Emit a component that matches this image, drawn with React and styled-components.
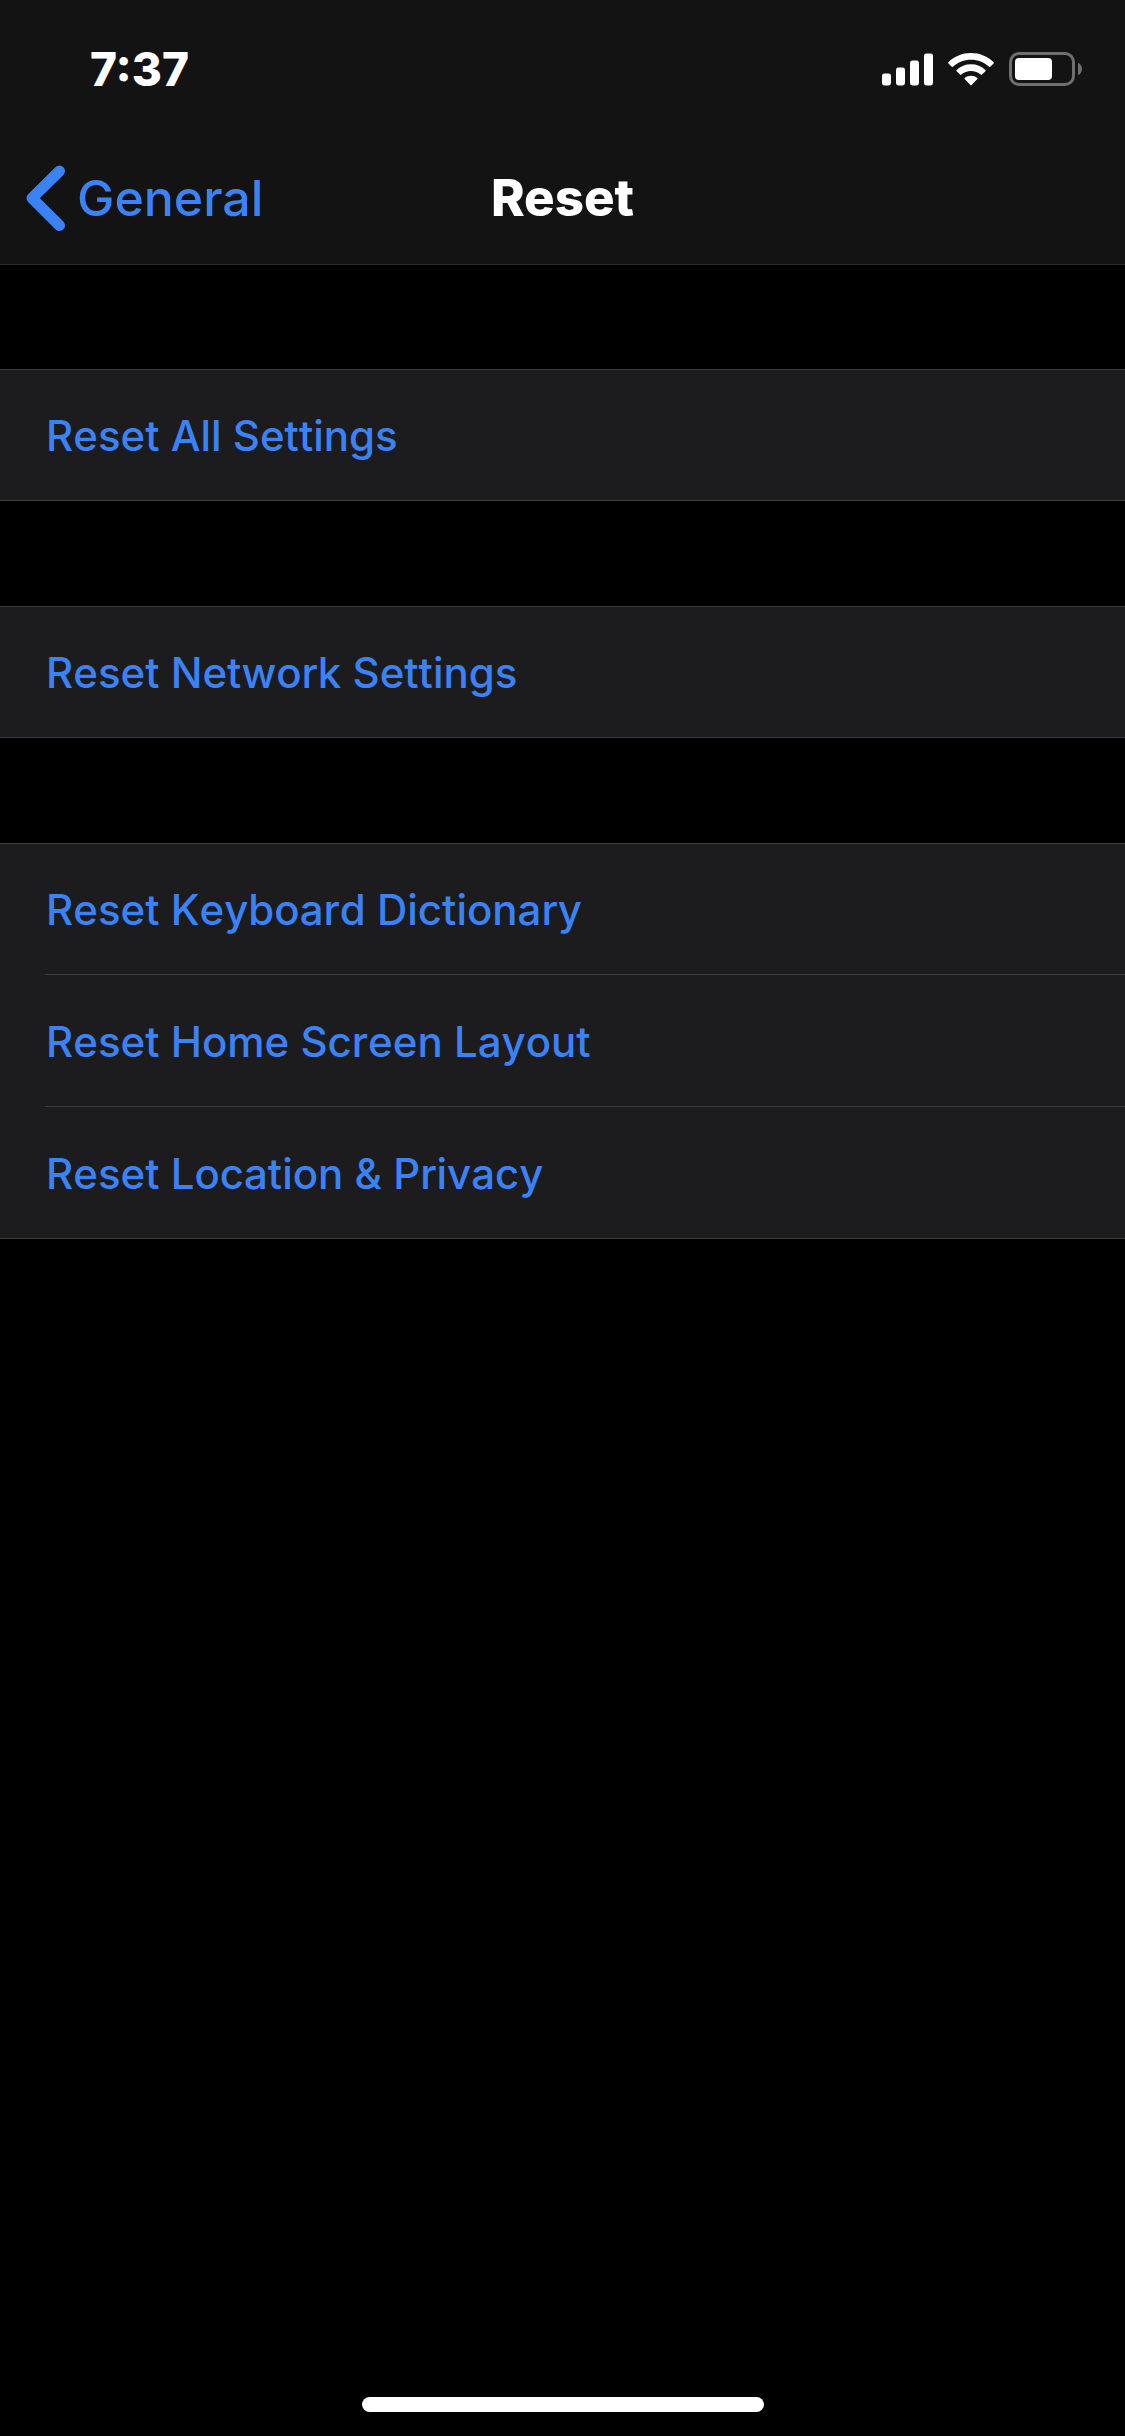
import React from 'react';
import styled, { createGlobalStyle } from 'styled-components';

const colors = {
  black: '#000',
  white: '#fff',
  bar: '#131313',
  barLine: '#2a2a2b',
  cell: '#1c1c1e',
  cellLine: '#3d3d41',
  blue: '#3b82f7',
  battery: '#6f6f6f',
};

const GlobalStyle = createGlobalStyle`
  *, *::before, *::after {
    box-sizing: border-box;
  }

  body {
    margin: 0;
    background: ${colors.black};
    color: ${colors.white};
    font-family: Inter, 'Liberation Sans', sans-serif;
  }
`;

const Screen = styled.div`
  display: flex;
  flex-direction: column;
  min-height: 100vh;
`;

const Header = styled.header`
  background: ${colors.bar};
  border-bottom: 1px solid ${colors.barLine};
`;

const StatusBar = styled.div`
  display: flex;
  justify-content: space-between;
  align-items: center;
  height: 132px;
  padding: 6px 42px 0 90px;

  svg {
    display: block;
  }
`;

const Time = styled.time`
  font-size: 46px;
  font-weight: 800;
  line-height: 52px;
`;

const StatusIcons = styled.div`
  display: flex;
  align-items: center;
  gap: 15px;
`;

const NavBar = styled.nav`
  display: grid;
  grid-template-columns: 1fr auto 1fr;
  align-items: center;
  height: 132px;
  padding: 0 26px;
`;

const BackLink = styled.a`
  display: flex;
  align-items: center;
  justify-self: start;
  gap: 11px;
  color: ${colors.blue};
  font-size: 50px;
  font-weight: 500;
  line-height: 60px;
  text-decoration: none;
`;

const Title = styled.h1`
  margin: 0;
  font-size: 51px;
  font-weight: 800;
  line-height: 60px;
`;

const Main = styled.main`
  display: flex;
  flex: 1;
  flex-direction: column;
  gap: 105px;
  padding-top: 104px;
`;

const Group = styled.ul`
  margin: 0;
  padding: 0;
  list-style: none;
  background: ${colors.cell};
  border-bottom: 1px solid ${colors.cellLine};
  box-shadow: inset 0 1px ${colors.cellLine};
`;

const Row = styled.li`
  padding-left: 45px;

  &:not(:last-child) button {
    height: 132px;
    border-bottom: 1px solid ${colors.cellLine};
  }
`;

const RowButton = styled.button`
  display: block;
  width: 100%;
  height: 131px;
  padding: 3px 1px 0;
  border: 0;
  background: none;
  color: ${colors.blue};
  font: inherit;
  font-size: 42px;
  font-weight: 500;
  font-kerning: none;
  line-height: 52px;
  text-align: left;
  cursor: pointer;
`;

const Footer = styled.footer`
  display: flex;
  justify-content: center;
  padding-bottom: 24px;
`;

const HomeIndicator = styled.div`
  width: 402px;
  height: 15px;
  border-radius: 8px;
  background: ${colors.white};
`;

const SignalIcon = () => (
  <svg width="51" height="33" viewBox="0 0 51 33" fill="#fff" aria-hidden="true">
    <rect x="0" y="20.5" width="9" height="12" rx="2.4" />
    <rect x="14" y="14.5" width="9" height="18" rx="2.4" />
    <rect x="28" y="7.5" width="9" height="25" rx="2.4" />
    <rect x="42" y="0.5" width="9" height="32" rx="2.4" />
  </svg>
);

const WifiIcon = () => (
  <svg width="46" height="33" viewBox="0 0 46 33" fill="#fff" aria-hidden="true">
    <path d="M23 0C31.600 0 39.600 3.300 45.600 9.200Q46.200 9.800 45.600 10.400L42.300 13.800Q41.700 14.400 41.100 13.800C36.200 9.200 29.800 6.700 23 6.700S9.800 9.200 4.900 13.800Q4.300 14.400 3.700 13.800L0.400 10.400Q-0.200 9.800 0.400 9.200C6.400 3.300 14.400 0 23 0Z" />
    <path d="M23 11.300C28.500 11.300 33.500 13.300 37.400 16.900Q38 17.500 37.400 18.200L34 21.600Q33.400 22.200 32.700 21.600C30 19.300 26.700 18 23 18S16 19.300 13.300 21.600Q12.600 22.200 12 21.600L8.600 18.200Q8 17.500 8.600 16.900C12.500 13.300 17.500 11.300 23 11.300Z" />
    <path d="M23 22.700C25.500 22.700 27.500 23.500 29.300 24.900Q29.900 25.500 29.300 26.100L23.600 32.100Q23 32.700 22.400 32.100L16.700 26.100Q16.100 25.500 16.700 24.900C18.500 23.500 20.500 22.700 23 22.700Z" />
  </svg>
);

const BatteryIcon = () => (
  <svg width="74" height="34" viewBox="0 0 74 34" aria-hidden="true">
    <rect x="1.500" y="1.500" width="63" height="31" rx="8.500" fill="none" stroke={colors.battery} strokeWidth="3" />
    <rect x="6" y="6" width="37" height="22" rx="4" fill="#fff" />
    <path d="M69 10.700C71.400 11.700 73 14.200 73 17S71.400 22.300 69 23.300Z" fill={colors.battery} />
  </svg>
);

const ChevronIcon = () => (
  <svg width="40" height="66" viewBox="0 0 40 66" fill="none" aria-hidden="true">
    <path
      d="M33.500 6L6 33.200L33.500 60.500"
      stroke="currentColor"
      strokeWidth="11"
      strokeLinecap="round"
      strokeLinejoin="round"
    />
  </svg>
);

const groups = [
  ['Reset All Settings'],
  ['Reset Network Settings'],
  ['Reset Keyboard Dictionary', 'Reset Home Screen Layout', 'Reset Location & Privacy'],
];

const App = () => (
  <Screen>
    <GlobalStyle />
    <Header>
      <StatusBar>
        <Time>7:37</Time>
        <StatusIcons>
          <SignalIcon />
          <WifiIcon />
          <BatteryIcon />
        </StatusIcons>
      </StatusBar>
      <NavBar>
        <BackLink href="#general">
          <ChevronIcon />
          General
        </BackLink>
        <Title>Reset</Title>
      </NavBar>
    </Header>
    <Main>
      {groups.map(rows => (
        <Group key={rows[0]}>
          {rows.map(label => (
            <Row key={label}>
              <RowButton type="button">{label}</RowButton>
            </Row>
          ))}
        </Group>
      ))}
    </Main>
    <Footer>
      <HomeIndicator />
    </Footer>
  </Screen>
);

export default App;
